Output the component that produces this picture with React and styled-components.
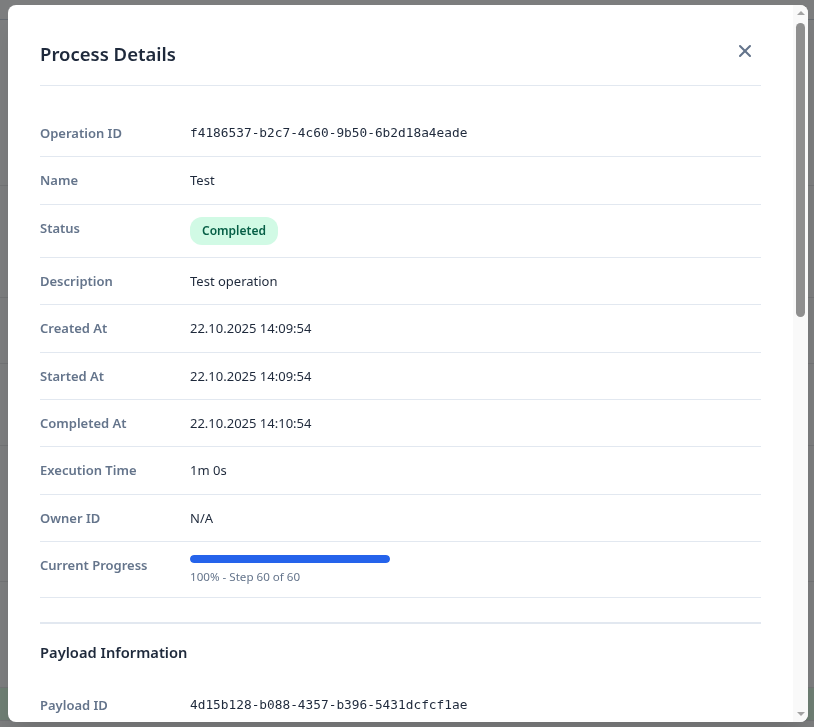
import React from 'react';
import styled, { createGlobalStyle } from 'styled-components';
import { X } from 'lucide-react';

const GlobalStyle = createGlobalStyle`
  html, body {
    margin: 0;
    padding: 0;
    height: 100%;
    overflow: hidden;
    font-family: 'Noto Sans', 'Open Sans', sans-serif;
    background: #ffffff;
  }
`;

// page behind the dialog, only slivers of it show
const Page = styled.div`
  display: flex;
  flex-direction: column;
  height: 727px;
  background: #f8fafc;
`;

const PageBand = styled.div`
  height: ${({ h }) => h}px;
  border-bottom: 1px solid ${({ strong }) => (strong ? '#cbd5e1' : '#e5e7eb')};
  background: ${({ tint }) => tint || 'transparent'};
  flex-shrink: 0;
`;

const Overlay = styled.div`
  position: fixed;
  inset: 0;
  background: rgba(0, 0, 0, 0.5);
  display: flex;
  align-items: flex-start;
  padding: 5px 6px 5px 8px;
`;

const Modal = styled.div`
  width: 800px;
  height: 717px;
  background: #ffffff;
  border-radius: 8px;
  overflow: hidden;
  display: flex;
  box-shadow: 0 20px 25px -5px rgba(0, 0, 0, 0.1);
`;

const Body = styled.div`
  flex: 1;
  min-width: 0;
  overflow: hidden;
  padding: 32px 32px 0;
`;

const ScrollRail = styled.div`
  width: 15px;
  flex-shrink: 0;
  background: #f9f9f9;
  display: flex;
  flex-direction: column;
`;

const ArrowBox = styled.div`
  height: 16px;
  display: flex;
  align-items: center;
  justify-content: center;

  &::after {
    content: '';
    width: 0;
    height: 0;
    border-left: 4px solid transparent;
    border-right: 4px solid transparent;
    ${({ down }) =>
      down ? 'border-top: 4px solid #a3a3a3;' : 'border-bottom: 4px solid #a3a3a3;'}
  }
`;

const Track = styled.div`
  flex: 1;
  padding: 2px 3px 0;
`;

const Thumb = styled.div`
  height: 294px;
  border-radius: 5px;
  background: #8f8f8f;
`;

const Header = styled.div`
  display: flex;
  align-items: center;
  justify-content: space-between;
  padding: 2px 0 16px;
  border-bottom: 1px solid #e2e8f0;
`;

const Title = styled.h2`
  margin: 0;
  font-size: 18.5px;
  line-height: 30px;
  font-weight: 600;
  color: #1e293b;
`;

const CloseButton = styled.button`
  width: 32px;
  height: 32px;
  border: none;
  background: transparent;
  color: #64748b;
  display: flex;
  align-items: center;
  justify-content: center;
  padding: 0;
  margin-top: -6px;
  cursor: pointer;
`;

const Table = styled.div`
  margin-top: 24px;
`;

const Row = styled.div`
  display: grid;
  grid-template-columns: 150px 1fr;
  align-items: start;
  padding: 12px 0;
  border-bottom: ${({ last }) => (last ? 'none' : '1px solid #e2e8f0')};
`;

const Label = styled.div`
  font-size: 13px;
  line-height: 22.4px;
  font-weight: 600;
  color: #64748b;
`;

const Value = styled.div`
  font-size: 13px;
  line-height: 22.4px;
  color: #1e293b;
  font-family: ${({ mono }) => (mono ? "'DejaVu Sans Mono', 'Liberation Mono', monospace" : 'inherit')};
  ${({ mono }) => mono && 'font-size: 12.8px;'}
`;

const Badge = styled.span`
  display: inline-flex;
  align-items: center;
  height: 28px;
  padding: 0 12px;
  border-radius: 12px;
  background: #d1fae5;
  color: #065f46;
  font-size: 12px;
  font-weight: 600;
`;

const ProgressTrack = styled.div`
  width: 200px;
  height: 8px;
  margin-top: 1px;
  border-radius: 4px;
  background: #e2e8f0;
  overflow: hidden;
`;

const ProgressFill = styled.div`
  height: 100%;
  background: #2563eb;
  border-radius: 4px;
`;

const ProgressText = styled.div`
  margin-top: 5px;
  font-size: 11.6px;
  line-height: 17px;
  color: #64748b;
`;

const Section = styled.div`
  margin-top: 24px;
  border-top: 2px solid #e2e8f0;
  padding-top: 16px;
`;

const SectionTitle = styled.h3`
  margin: 0 0 18px;
  font-size: 14.7px;
  line-height: 24px;
  font-weight: 600;
  color: #1e293b;
`;

const details = [
  { label: 'Operation ID', value: 'f4186537-b2c7-4c60-9b50-6b2d18a4eade', mono: true },
  { label: 'Name', value: 'Test' },
  { label: 'Status', badge: 'Completed' },
  { label: 'Description', value: 'Test operation' },
  { label: 'Created At', value: '22.10.2025 14:09:54' },
  { label: 'Started At', value: '22.10.2025 14:09:54' },
  { label: 'Completed At', value: '22.10.2025 14:10:54' },
  { label: 'Execution Time', value: '1m 0s' },
  { label: 'Owner ID', value: 'N/A' },
  { label: 'Current Progress', progress: { percent: 100, step: 60, total: 60 } },
];

const payload = [
  { label: 'Payload ID', value: '4d15b128-b088-4357-b396-5431dcfcf1ae', mono: true },
];

const DetailRow = ({ item, last }) => (
  <Row last={last}>
    <Label>{item.label}</Label>
    {item.badge && (
      <div>
        <Badge>{item.badge}</Badge>
      </div>
    )}
    {item.progress && (
      <div>
        <ProgressTrack>
          <ProgressFill style={{ width: `${item.progress.percent}%` }} />
        </ProgressTrack>
        <ProgressText>
          {item.progress.percent}% - Step {item.progress.step} of {item.progress.total}
        </ProgressText>
      </div>
    )}
    {item.value !== undefined && <Value mono={item.mono}>{item.value}</Value>}
  </Row>
);

const App = () => (
  <>
    <GlobalStyle />
    <Page>
      <PageBand h={19} strong />
      <PageBand h={165} />
      <PageBand h={111} />
      <PageBand h={65} />
      <PageBand h={81} />
      <PageBand h={135} />
      <PageBand h={105} />
      <PageBand h={32} tint="#dcfce7" />
    </Page>
    <Overlay>
      <Modal>
        <Body>
          <Header>
            <Title>Process Details</Title>
            <CloseButton aria-label="Close">
              <X size={20} strokeWidth={2.5} />
            </CloseButton>
          </Header>

          <Table>
            {details.map((item) => (
              <DetailRow key={item.label} item={item} />
            ))}
          </Table>

          <Section>
            <SectionTitle>Payload Information</SectionTitle>
            {payload.map((item) => (
              <DetailRow key={item.label} item={item} last />
            ))}
          </Section>
        </Body>
        <ScrollRail>
          <ArrowBox />
          <Track>
            <Thumb />
          </Track>
          <ArrowBox down />
        </ScrollRail>
      </Modal>
    </Overlay>
  </>
);

export default App;
